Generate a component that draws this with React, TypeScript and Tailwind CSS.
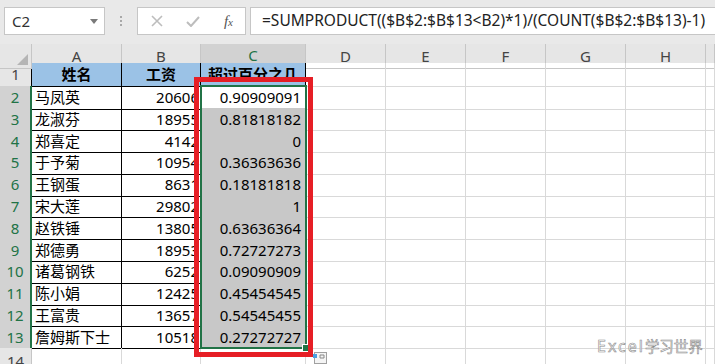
import React from 'react';

const rows: [string, number, string][] = [
  ['马凤英', 20606, '0.90909091'],
  ['龙淑芬', 18955, '0.81818182'],
  ['郑喜定', 4142, '0'],
  ['于予菊', 10954, '0.36363636'],
  ['王钢蛋', 8631, '0.18181818'],
  ['宋大莲', 29802, '1'],
  ['赵铁锤', 13805, '0.63636364'],
  ['郑德勇', 18953, '0.72727273'],
  ['诸葛钢铁', 6252, '0.09090909'],
  ['陈小娟', 12425, '0.45454545'],
  ['王富贵', 13657, '0.54545455'],
  ['詹姆斯下士', 10518, '0.27272727'],
];

const cols = ['A', 'B', 'C', 'D', 'E', 'F', 'G', 'H', ''];
const gridCols = 'grid grid-cols-[32px_90px_79px_105px_80px_80px_80px_80px_80px_1fr]';
const grid = 'border-r border-b border-[#d9d9d9]';

const EmptyCells = () => (
  <>
    {[0, 1, 2, 3, 4, 5].map((i) => (
      <div key={i} className={grid} />
    ))}
  </>
);

export default function App() {
  return (
    <div className="relative w-[715px] h-[364px] overflow-hidden bg-white font-['Noto_Sans','Noto_Sans_CJK_SC',sans-serif] text-[15px] text-black">
      {/* formula bar */}
      <div className="h-[44px] bg-[#e9e9e9] flex items-start pt-[7px] pl-[4px] gap-0">
        <div className="w-[101px] h-[28px] bg-white border border-[#c6c6c6] flex items-center justify-between pl-[7px] pr-[6px] text-[#333]">
          <span>C2</span>
          <svg width="8" height="5" viewBox="0 0 8 5">
            <path d="M0 0h8L4 5z" fill="#7a7a7a" />
          </svg>
        </div>
        <div className="w-[32px] h-[28px] flex flex-col items-center justify-center gap-[2px]">
          <span className="w-[2px] h-[2px] bg-[#a8a8a8]" />
          <span className="w-[2px] h-[2px] bg-[#a8a8a8]" />
          <span className="w-[2px] h-[2px] bg-[#a8a8a8]" />
        </div>
        <div className="w-[109px] h-[28px] bg-white border border-[#c6c6c6] flex items-center pl-[13px] pr-[12px] justify-between">
          <svg width="12" height="12" viewBox="0 0 12 12">
            <path d="M1 1l10 10M11 1L1 11" stroke="#bdbdbd" strokeWidth="1.6" />
          </svg>
          <svg width="14" height="11" viewBox="0 0 14 11">
            <path d="M1 6l4 4 8-9" stroke="#bdbdbd" strokeWidth="2" fill="none" />
          </svg>
          <span className="font-['Liberation_Serif',serif] italic text-[15px] text-[#555] leading-none">
            f<span className="text-[11px]">x</span>
          </span>
        </div>
        <div className="ml-[4px] flex-1 h-[28px] bg-white border border-[#c6c6c6] border-r-0 flex items-center pl-[11px] text-[#222] text-[15.5px] whitespace-nowrap">
          =SUMPRODUCT(($B$2:$B$13&lt;B2)*1)/(COUNT($B$2:$B$13)-1)
        </div>
      </div>

      {/* column headers */}
      <div className={`${gridCols} h-[19px] bg-[#e6e6e6] text-[#444]`}>
        <div className="relative border-r border-b border-[#c6c6c6]">
          <svg className="absolute right-[3px] bottom-[3px]" width="11" height="11" viewBox="0 0 11 11">
            <path d="M11 0v11H0z" fill="#b5b5b5" />
          </svg>
        </div>
        {cols.map((c, i) => (
          <div
            key={c + i}
            className={
              i === 2
                ? 'flex items-center justify-center bg-[#d2d2d2] text-[#217346] border-r border-[#c6c6c6] border-b-2 border-b-[#217346]'
                : i < 2
                ? 'flex items-center justify-center border-r border-[#c6c6c6] border-b border-b-black'
                : 'flex items-center justify-center border-r border-b border-[#c6c6c6]'
            }
          >
            {c}
          </div>
        ))}
      </div>

      {/* row 1 */}
      <div className={`${gridCols} h-[23px]`}>
        <div className="flex items-center justify-center bg-[#e6e6e6] text-[#444] border-b border-[#c6c6c6] border-r border-r-black">1</div>
        <div className="flex items-center justify-center bg-[#9bc2e6] font-bold border-r border-b border-black">姓名</div>
        <div className="flex items-center justify-center bg-[#9bc2e6] font-bold border-r border-b border-black">工资</div>
        <div className="flex items-center justify-center bg-[#9bc2e6] font-bold border-r border-b border-black whitespace-nowrap overflow-hidden">超过百分之几</div>
        <EmptyCells />
      </div>

      {/* data rows */}
      {rows.map(([name, pay, pct], i) => (
        <div key={name} className={`${gridCols} h-[21.8px]`}>
          <div className="flex items-center justify-center bg-[#d2d2d2] text-[#217346] border-b border-[#bfbfbf] border-r-2 border-r-[#217346]">
            {i + 2}
          </div>
          <div className="flex items-center pl-[3px] border-r border-b border-black whitespace-nowrap overflow-hidden">{name}</div>
          <div className="flex items-center justify-end pr-[1px] border-r border-b border-black">{pay}</div>
          <div
            className={`flex items-center justify-end pr-[4px] border-r border-b border-black ${i === 0 ? 'bg-white' : 'bg-[#c8c8c8]'}`}
          >
            {pct}
          </div>
          <EmptyCells />
        </div>
      ))}

      {/* row 14 */}
      <div className={`${gridCols} h-[22px]`}>
        <div className="flex items-start pt-[2px] justify-center bg-[#e6e6e6] text-[#444] border-r border-b border-[#c6c6c6]">14</div>
        <div className={grid} />
        <div className={grid} />
        <div className={grid} />
        <EmptyCells />
      </div>

      {/* selection C2:C13 */}
      <div className="absolute left-[200px] top-[85px] w-[107px] h-[264px] border-2 border-[#217346]" />
      <div className="absolute left-[302px] top-[344px] w-[8px] h-[8px] bg-[#217346] border border-white" />

      {/* red highlight */}
      <div className="absolute left-[194px] top-[77px] w-[119px] h-[280px] border-[5px] border-[#e61e25]" />

      {/* paste options */}
      <svg className="absolute left-[311px] top-[352px]" width="16" height="12" viewBox="0 0 16 12">
        <rect x="3.5" y="0.5" width="12" height="11" fill="#f4f4f4" stroke="#a0a0a0" />
        <rect x="2" y="2" width="4" height="4" fill="#4a9fe0" />
        <path d="M9 3h4v3h-4z" fill="none" stroke="#888" />
      </svg>

      {/* watermark */}
      <div className="absolute left-[597px] top-[336px] leading-[20px] text-white [-webkit-text-stroke:0.6px_#8c8c8c] whitespace-nowrap flex items-end">
        <span className="text-[16px] tracking-[2px]">Excel</span>
        <span className="text-[14.5px] font-['Noto_Sans_CJK_SC',sans-serif]">学习世界</span>
      </div>
    </div>
  );
}
